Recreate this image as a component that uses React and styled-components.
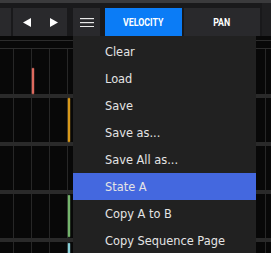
import React from "react";
import styled, { createGlobalStyle } from "styled-components";

const GlobalStyle = createGlobalStyle`
  html, body { margin: 0; padding: 0; background: #080808; }
  body { width: 271px; height: 253px; overflow: hidden; font-family: "DejaVu Sans", sans-serif; }
`;

const Frame = styled.div`
  position: relative;
  width: 271px;
  height: 253px;
  overflow: hidden;
  display: flex;
  flex-direction: column;
  background: #080808;
`;

const TopStrip = styled.div`
  height: 3px;
  background: #3a3a3c;
  flex: none;
`;

const Toolbar = styled.div`
  height: 33px;
  flex: none;
  display: flex;
  align-items: flex-end;
  background: #19191b;
`;

const ToolButton = styled.div`
  flex: none;
  height: 28px;
  width: ${(p) => p.$w}px;
  margin-left: ${(p) => p.$ml || 0}px;
  background: ${(p) => (p.$active ? "#0b7cf6" : "#29292c")};
  display: flex;
  align-items: center;
  justify-content: center;
  gap: ${(p) => p.$gap || 0}px;
  color: #fff;
`;

const TailPanel = styled.div`
  flex: 1;
  align-self: stretch;
  margin-left: 2px;
  background: #1f1f21;
`;

const Label = styled.span`
  font-family: Roboto, "Liberation Sans", sans-serif;
  font-weight: 700;
  font-size: 11px;
  line-height: 1;
  display: inline-block;
  transform: scaleX(0.8);
  color: #fff;
`;

const Canvas = styled.div`
  flex: 1;
  display: flex;
  flex-direction: column;
  padding-top: 4px;
`;

const HeaderRow = styled.div`
  height: 7px;
  flex: none;
  border-top: 1px solid #2c2c2c;
  border-bottom: 1px solid #2c2c2c;
`;

const Lanes = styled.div`
  position: relative;
  flex: 1;
  display: flex;
  flex-direction: column;
  background-image: repeating-linear-gradient(
    to right,
    transparent 0 13px,
    #272727 13px 14px,
    transparent 14px 18px
  );
`;

const Lane = styled.div`
  flex: none;
  height: ${(p) => p.$h}px;
`;

const Band = styled.div`
  flex: none;
  height: 4px;
  background: #2a2a2a;
`;

const Note = styled.div`
  position: absolute;
  width: 2px;
  border-radius: 1px;
  background: ${(p) => p.$c};
  box-shadow: 0 0 0 0.5px ${(p) => p.$c}66;
`;

const Menu = styled.div`
  position: absolute;
  top: 36px;
  left: 73px;
  width: 183px;
  height: 230px;
  background: #212121;
  padding-top: 2px;
  box-sizing: border-box;
`;

const MenuItem = styled.div`
  height: 27px;
  display: flex;
  align-items: center;
  padding-left: 32px;
  font-family: "DejaVu Sans", sans-serif;
  font-size: 11.4px;
  color: #e4e4e4;
  background: ${(p) => (p.$selected ? "#4468df" : "transparent")};
  white-space: nowrap;
`;

const LeftArrow = () => (
  <svg width="8" height="9" viewBox="0 0 8 9">
    <polygon points="0,4.5 8,0 8,9" fill="#fff" />
  </svg>
);

const RightArrow = () => (
  <svg width="8" height="9" viewBox="0 0 8 9">
    <polygon points="8,4.5 0,0 0,9" fill="#fff" />
  </svg>
);

const Hamburger = () => (
  <svg width="14" height="9" viewBox="0 0 14 9">
    <rect x="0" y="0" width="14" height="1.2" fill="#e8e8e8" />
    <rect x="0" y="4" width="14" height="1.2" fill="#e8e8e8" />
    <rect x="0" y="8" width="14" height="1.2" fill="#e8e8e8" />
  </svg>
);

const items = [
  "Clear",
  "Load",
  "Save",
  "Save as...",
  "Save All as...",
  "State A",
  "Copy A to B",
  "Copy Sequence Page",
];

const notes = [
  { x: 31.5, top: 19, h: 26, c: "#de6a5e" },
  { x: 68, top: 49, h: 44, c: "#d8991a" },
  { x: 68, top: 146, h: 42, c: "#74b46c" },
  { x: 68, top: 194, h: 20, c: "#88d0d8" },
];

export default function App() {
  return (
    <Frame>
      <GlobalStyle />
      <TopStrip />
      <Toolbar>
        <ToolButton $w={11} />
        <ToolButton $w={54} $ml={2} $gap={19}>
          <LeftArrow />
          <RightArrow />
        </ToolButton>
        <ToolButton $w={27} $ml={6}>
          <Hamburger />
        </ToolButton>
        <ToolButton $w={77} $ml={5} $active>
          <Label>VELOCITY</Label>
        </ToolButton>
        <ToolButton $w={76} $ml={2}>
          <Label>PAN</Label>
        </ToolButton>
        <TailPanel />
      </Toolbar>
      <Canvas>
        <HeaderRow />
        <Lanes>
          <Lane $h={45} />
          <Band />
          <Lane $h={44} />
          <Band />
          <Lane $h={44} />
          <Band />
          <Lane $h={44} />
          <Band />
          <Lane $h={44} />
          {notes.map((n, i) => (
            <Note
              key={i}
              $c={n.c}
              style={{ left: n.x, top: n.top, height: n.h }}
            />
          ))}
        </Lanes>
      </Canvas>
      <Menu>
        {items.map((t) => (
          <MenuItem key={t} $selected={t === "State A"}>
            {t}
          </MenuItem>
        ))}
      </Menu>
    </Frame>
  );
}
